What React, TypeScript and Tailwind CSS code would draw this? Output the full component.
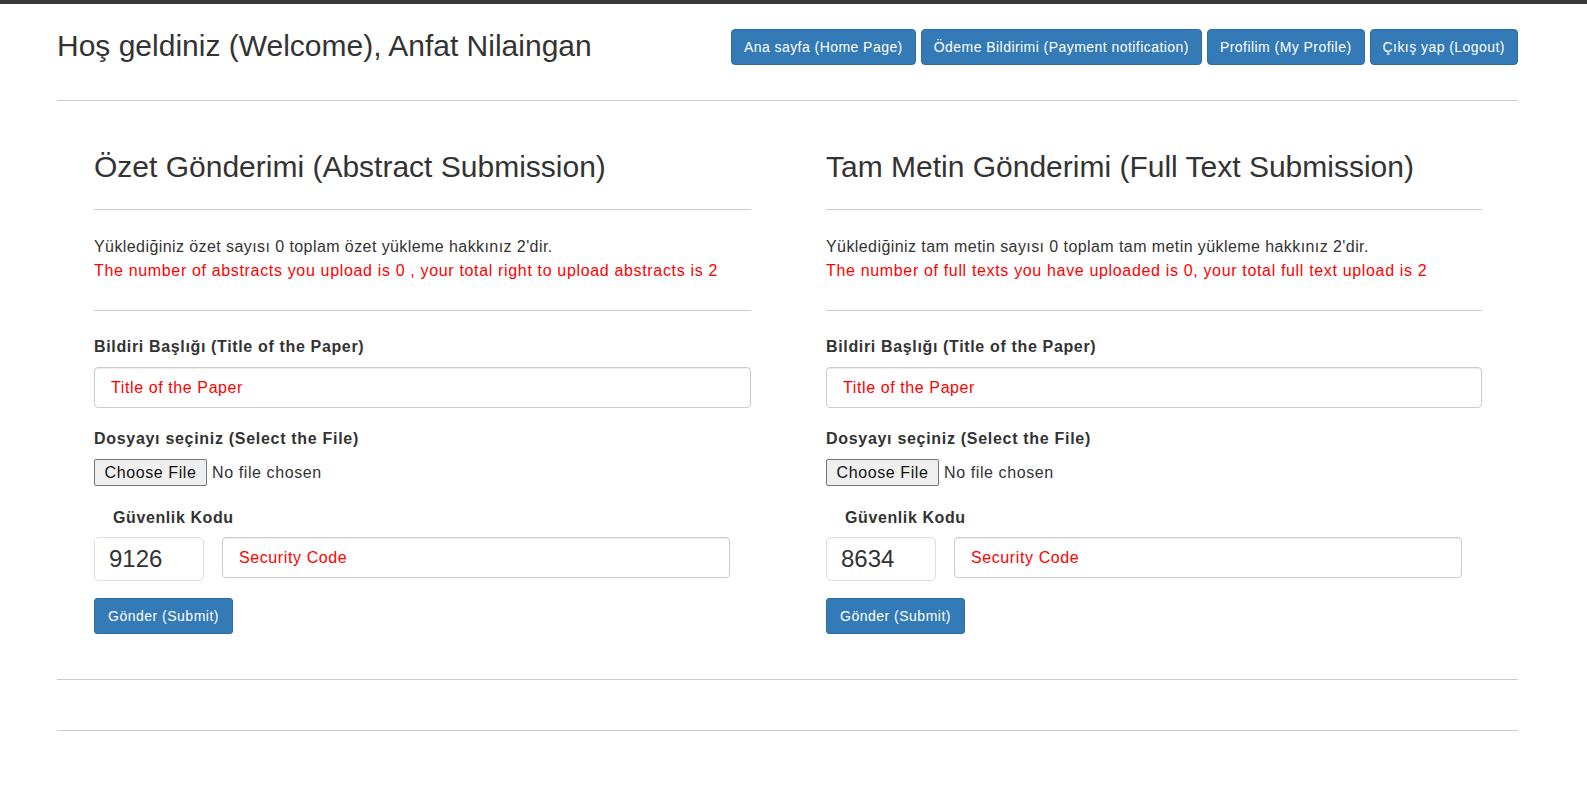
import React from "react";

const navButtons = [
  "Ana sayfa (Home Page)",
  "Ödeme Bildirimi (Payment notification)",
  "Profilim (My Profile)",
  "Çıkış yap (Logout)",
];

type SectionProps = {
  title: string;
  trLine: string;
  enLine: string;
  code: string;
};

function Section({ title, trLine, enLine, code }: SectionProps) {
  return (
    <div className="flex flex-col">
      <h2 className="text-[30px] leading-[33px] font-normal text-[#333]">{title}</h2>
      <div className="mt-[26px] border-t border-[#cccccc]" />
      <div className="mt-[25px] text-[16px] leading-[24px]">
        <div className="tracking-[0.42px] text-[#333]">{trLine}</div>
        <div className="tracking-[0.66px] text-[#ff0000]">{enLine}</div>
      </div>
      <div className="mt-[27px] border-t border-[#cccccc]" />
      <label className="mt-[24px] text-[16px] leading-[24px] font-bold tracking-[0.65px] text-[#333]">
        Bildiri Başlığı (Title of the Paper)
      </label>
      <input
        type="text"
        placeholder="Title of the Paper"
        className="mt-[8px] h-[41px] w-full rounded-[4px] border border-[#cccccc] bg-white px-[16px] text-[16px] tracking-[0.6px] text-[#333] shadow-[inset_0_1px_1px_rgba(0,0,0,0.075)] outline-none placeholder:text-[#ff0000]"
      />
      <label className="mt-[19px] text-[16px] leading-[24px] font-bold tracking-[0.7px] text-[#333]">
        Dosyayı seçiniz (Select the File)
      </label>
      <div className="mt-[8px] flex h-[27px] items-center">
        <span className="flex h-[27px] w-[113px] items-center justify-center rounded-[2px] border border-[#767676] bg-[#efefef] text-[16px] tracking-[0.6px] text-[#111]">
          Choose File
        </span>
        <span className="ml-[5px] text-[16px] tracking-[0.6px] text-[#333]">No file chosen</span>
      </div>
      <label className="mt-[20px] pl-[19px] text-[16px] leading-[24px] font-bold tracking-[0.6px] text-[#333]">
        Güvenlik Kodu
      </label>
      <div className="mt-[7px] flex items-start">
        <div className="flex h-[44px] w-[110px] items-center rounded-[5px] border border-[#dddddd] bg-white pl-[14px] text-[24px] text-[#333]">
          {code}
        </div>
        <input
          type="text"
          placeholder="Security Code"
          className="ml-[18px] h-[41px] w-[508px] rounded-[4px] border border-[#cccccc] bg-white px-[16px] text-[16px] tracking-[0.6px] text-[#333] shadow-[inset_0_1px_1px_rgba(0,0,0,0.075)] outline-none placeholder:text-[#ff0000]"
        />
      </div>
      <div className="mt-[17px]">
        <button className="h-[36px] rounded-[3px] border border-[#2e6da4] bg-[#337ab7] px-[13px] text-[14px] tracking-[0.5px] text-white">
          Gönder (Submit)
        </button>
      </div>
    </div>
  );
}

export default function App() {
  return (
    <div className="min-h-screen bg-white font-['Liberation_Sans',Arial,sans-serif] text-[#333]">
      <div className="h-[4px] bg-[#3a3a3a]" />
      <div className="pl-[57px] pr-[69px]">
        <div className="flex items-start justify-between pt-[25px]">
          <h1 className="text-[30px] leading-[33px] font-normal text-[#333]">
            Hoş geldiniz (Welcome), Anfat Nilaingan
          </h1>
          <div className="flex gap-[5px]">
            {navButtons.map((b) => (
              <button
                key={b}
                className="h-[36px] rounded-[4px] border border-[#2e6da4] bg-[#337ab7] px-[12px] text-[14px] tracking-[0.45px] text-white"
              >
                {b}
              </button>
            ))}
          </div>
        </div>
        <div className="mt-[35px] border-t border-[#cccccc]" />
        <div className="grid grid-cols-[657px_656px] gap-x-[75px] pl-[37px] pt-[49px]">
          <Section
            title="Özet Gönderimi (Abstract Submission)"
            trLine="Yüklediğiniz özet sayısı 0 toplam özet yükleme hakkınız 2'dir."
            enLine="The number of abstracts you upload is 0 , your total right to upload abstracts is 2"
            code="9126"
          />
          <Section
            title="Tam Metin Gönderimi (Full Text Submission)"
            trLine="Yüklediğiniz tam metin sayısı 0 toplam tam metin yükleme hakkınız 2'dir."
            enLine="The number of full texts you have uploaded is 0, your total full text upload is 2"
            code="8634"
          />
        </div>
        <div className="mt-[45px] border-t border-[#cccccc]" />
        <div className="mt-[50px] border-t border-[#cccccc]" />
      </div>
    </div>
  );
}
